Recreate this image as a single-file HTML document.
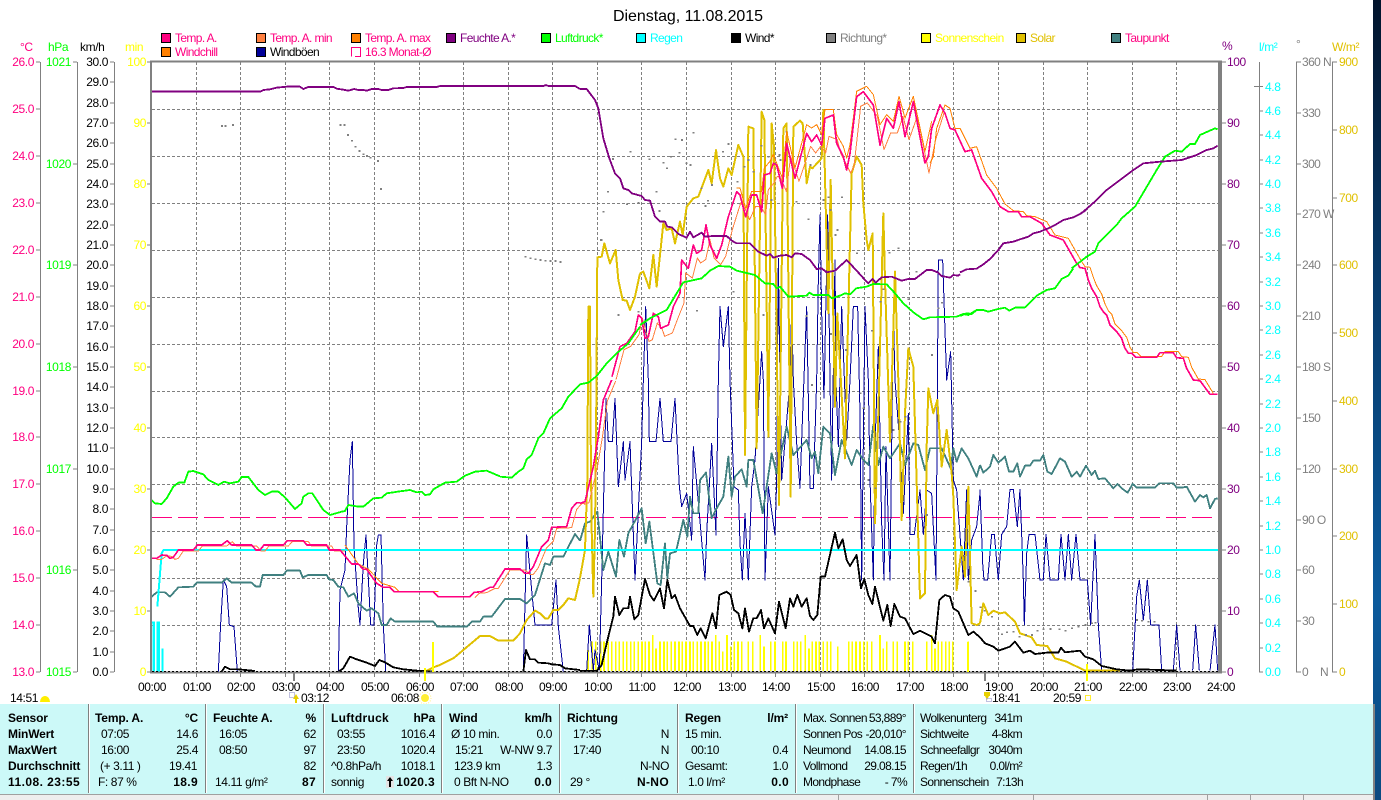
<!DOCTYPE html>
<html><head><meta charset="utf-8"><title>Dienstag, 11.08.2015</title>
<style>
html,body{margin:0;padding:0;background:#fff;width:1381px;height:800px;overflow:hidden}
svg{display:block;position:absolute;left:0;top:0}
text{font-family:"Liberation Sans",sans-serif;font-size:12px;letter-spacing:-.4px}
.tl text{letter-spacing:-.62px}
.b{font-weight:bold;letter-spacing:-.15px}
.bd{letter-spacing:.35px}
.e{text-anchor:end}
.p{fill:#ff0080}.l{fill:#00ff00}.y{fill:#ffff00}.v{fill:#800080}.c{fill:#00ffff}.g{fill:#808080}.o{fill:#e0c000}
.g{letter-spacing:-.6px}
polyline,.cr{fill:none;shape-rendering:crispEdges}
polyline{stroke-linejoin:round}
.gr{stroke:#808080;stroke-width:1;stroke-dasharray:3 2;fill:none;shape-rendering:crispEdges}
.ax{stroke:#808080;fill:none;shape-rendering:crispEdges}
.pu{stroke:#800080;stroke-width:5.5}.gn{stroke:#00ff00;stroke-width:5.5}.te{stroke:#ff0080;stroke-width:5}
.ma{stroke:#ff8000;stroke-width:3}.mi{stroke:#ff8040;stroke-width:3}.td{stroke:#408080;stroke-width:5.5}
.bl{stroke:#000099;stroke-width:3}.go{stroke:#e0c000;stroke-width:6}.bk{stroke:#000;stroke-width:5.5}
</style></head><body>
<svg width="1381" height="800" viewBox="0 0 1381 800" xmlns="http://www.w3.org/2000/svg">
<defs><linearGradient id="bg" x1="0" y1="0" x2="0" y2="1"><stop offset="0" stop-color="#02142c"/><stop offset=".35" stop-color="#073a6a"/><stop offset=".75" stop-color="#0b5a9c"/><stop offset="1" stop-color="#0a4a80"/></linearGradient></defs>
<rect width="1381" height="800" fill="#fff"/>
<rect x="1373" y="0" width="8" height="800" fill="url(#bg)"/>

<text x="688" y="21" text-anchor="middle" style="font-size:16px;letter-spacing:-.05px">Dienstag, 11.08.2015</text>

<!-- legend -->
<g stroke="#000" stroke-width="1" shape-rendering="crispEdges">
<rect x="161.5" y="33.5" width="9" height="9" fill="#ff0080"/><rect x="256.5" y="33.5" width="9" height="9" fill="#ff8040"/><rect x="351.5" y="33.5" width="9" height="9" fill="#ff8000"/><rect x="446.5" y="33.5" width="9" height="9" fill="#800080"/><rect x="541.5" y="33.5" width="9" height="9" fill="#00ff00"/><rect x="636.5" y="33.5" width="9" height="9" fill="#00ffff"/><rect x="731.5" y="33.5" width="9" height="9" fill="#000"/><rect x="826.5" y="33.5" width="9" height="9" fill="#808080"/><rect x="921.5" y="33.5" width="9" height="9" fill="#ffff00"/><rect x="1016.5" y="33.5" width="9" height="9" fill="#e0c000"/><rect x="1111.5" y="33.5" width="9" height="9" fill="#408080"/>
<rect x="161.5" y="47.5" width="9" height="9" fill="#ff8000"/><rect x="256.5" y="47.5" width="9" height="9" fill="#000099"/>
<path d="M351.5 56.5V47.5H360.5V56.5H355" fill="none" stroke="#ff0080"/>
</g>
<g class="tl">
<text class="p" x="175" y="42">Temp. A.</text><text class="p" x="270" y="42">Temp. A. min</text><text class="p" x="365" y="42">Temp. A. max</text><text class="v" x="460" y="42">Feuchte A.*</text><text class="l" x="555" y="42">Luftdruck*</text><text class="c" x="650" y="42">Regen</text><text x="745" y="42">Wind*</text><text class="g" x="840" y="42">Richtung*</text><text class="y" x="935" y="42">Sonnenschein</text><text class="o" x="1030" y="42">Solar</text><text class="p" x="1125" y="42">Taupunkt</text>
<text class="p" x="175" y="56">Windchill</text><text x="270" y="56">Windböen</text><text class="p" x="365" y="56">16.3 Monat-Ø</text>
</g>
<text class="p" x="20" y="51">°C</text><text class="l" x="48" y="51">hPa</text><text x="80" y="51">km/h</text><text class="y" x="125" y="51">min</text>
<text class="v" x="1222" y="50">%</text><text class="c" x="1259" y="51">l/m²</text><text class="g" x="1296" y="48">°</text><text class="o" x="1332" y="51">W/m²</text>

<!-- axes -->
<path class="ax" stroke-width="1" d="M40.5 62V672M77.5 62V672M114.5 62V672M1259.5 62V672M1296.5 62V672M1332.5 62V672"/>
<path class="ax" stroke-width="1" d="M36 62h4M36 109h4M36 156h4M36 203h4M36 250h4M36 297h4M36 344h4M36 391h4M36 437h4M36 484h4M36 531h4M36 578h4M36 625h4M36 672h4
M73 62h4M73 164h4M73 265h4M73 367h4M73 469h4M73 570h4M73 672h4
M110 62h4M110 82h4M110 103h4M110 123h4M110 143h4M110 164h4M110 184h4M110 204h4M110 225h4M110 245h4M110 265h4M110 286h4M110 306h4M110 326h4M110 347h4M110 367h4M110 387h4M110 408h4M110 428h4M110 448h4M110 469h4M110 489h4M110 509h4M110 530h4M110 550h4M110 570h4M110 591h4M110 611h4M110 631h4M110 652h4M110 672h4
M147 62h4M147 123h4M147 184h4M147 245h4M147 306h4M147 367h4M147 428h4M147 489h4M147 550h4M147 611h4M147 672h4
M1221 62h5M1221 123h5M1221 184h5M1221 245h5M1221 306h5M1221 367h5M1221 428h5M1221 489h5M1221 550h5M1221 611h5M1221 672h5
M1254 86.5h9M1259 111h4M1259 135h4M1259 160h4M1259 184h4M1259 208h4M1259 233h4M1259 257h4M1259 282h4M1259 306h4M1259 330h4M1259 355h4M1259 379h4M1259 404h4M1259 428h4M1259 452h4M1259 477h4M1259 501h4M1259 526h4M1259 550h4M1259 574h4M1259 599h4M1259 623h4M1259 648h4M1259 672h4
M1296 62h5M1296 113h5M1296 164h5M1296 214h5M1296 265h5M1296 316h5M1296 367h5M1296 418h5M1296 469h5M1296 520h5M1296 570h5M1296 621h5M1296 672h5
M1332 62h5M1332 130h5M1332 198h5M1332 265h5M1332 333h5M1332 401h5M1332 469h5M1332 536h5M1332 604h5M1332 672h5"/>
<g class="p e">
<text class="p e" x="34" y="66">26.0</text><text class="p e" x="34" y="113">25.0</text><text class="p e" x="34" y="160">24.0</text><text class="p e" x="34" y="207">23.0</text><text class="p e" x="34" y="254">22.0</text><text class="p e" x="34" y="301">21.0</text><text class="p e" x="34" y="348">20.0</text><text class="p e" x="34" y="395">19.0</text><text class="p e" x="34" y="441">18.0</text><text class="p e" x="34" y="488">17.0</text><text class="p e" x="34" y="535">16.0</text><text class="p e" x="34" y="582">15.0</text><text class="p e" x="34" y="629">14.0</text><text class="p e" x="34" y="676">13.0</text>
</g>
<text class="l e" x="71" y="66">1021</text><text class="l e" x="71" y="168">1020</text><text class="l e" x="71" y="269">1019</text><text class="l e" x="71" y="371">1018</text><text class="l e" x="71" y="473">1017</text><text class="l e" x="71" y="574">1016</text><text class="l e" x="71" y="676">1015</text>
<g>
<text class="e" x="108" y="66">30.0</text><text class="e" x="108" y="86">29.0</text><text class="e" x="108" y="107">28.0</text><text class="e" x="108" y="127">27.0</text><text class="e" x="108" y="147">26.0</text><text class="e" x="108" y="168">25.0</text><text class="e" x="108" y="188">24.0</text><text class="e" x="108" y="208">23.0</text><text class="e" x="108" y="229">22.0</text><text class="e" x="108" y="249">21.0</text><text class="e" x="108" y="269">20.0</text><text class="e" x="108" y="290">19.0</text><text class="e" x="108" y="310">18.0</text><text class="e" x="108" y="330">17.0</text><text class="e" x="108" y="351">16.0</text><text class="e" x="108" y="371">15.0</text><text class="e" x="108" y="391">14.0</text><text class="e" x="108" y="412">13.0</text><text class="e" x="108" y="432">12.0</text><text class="e" x="108" y="452">11.0</text><text class="e" x="108" y="473">10.0</text><text class="e" x="108" y="493">9.0</text><text class="e" x="108" y="513">8.0</text><text class="e" x="108" y="534">7.0</text><text class="e" x="108" y="554">6.0</text><text class="e" x="108" y="574">5.0</text><text class="e" x="108" y="595">4.0</text><text class="e" x="108" y="615">3.0</text><text class="e" x="108" y="635">2.0</text><text class="e" x="108" y="656">1.0</text><text class="e" x="108" y="676">0.0</text>
</g>
<text class="y e" x="146" y="66">100</text><text class="y e" x="146" y="127">90</text><text class="y e" x="146" y="188">80</text><text class="y e" x="146" y="249">70</text><text class="y e" x="146" y="310">60</text><text class="y e" x="146" y="371">50</text><text class="y e" x="146" y="432">40</text><text class="y e" x="146" y="493">30</text><text class="y e" x="146" y="554">20</text><text class="y e" x="146" y="615">10</text><text class="y e" x="146" y="676">0</text>
<text class="v" x="1227" y="66">100</text><text class="v" x="1227" y="127">90</text><text class="v" x="1227" y="188">80</text><text class="v" x="1227" y="249">70</text><text class="v" x="1227" y="310">60</text><text class="v" x="1227" y="371">50</text><text class="v" x="1227" y="432">40</text><text class="v" x="1227" y="493">30</text><text class="v" x="1227" y="554">20</text><text class="v" x="1227" y="615">10</text><text class="v" x="1227" y="676">0</text>
<text class="c" x="1265" y="91">4.8</text><text class="c" x="1265" y="115">4.6</text><text class="c" x="1265" y="139">4.4</text><text class="c" x="1265" y="164">4.2</text><text class="c" x="1265" y="188">4.0</text><text class="c" x="1265" y="212">3.8</text><text class="c" x="1265" y="237">3.6</text><text class="c" x="1265" y="261">3.4</text><text class="c" x="1265" y="286">3.2</text><text class="c" x="1265" y="310">3.0</text><text class="c" x="1265" y="334">2.8</text><text class="c" x="1265" y="359">2.6</text><text class="c" x="1265" y="383">2.4</text><text class="c" x="1265" y="408">2.2</text><text class="c" x="1265" y="432">2.0</text><text class="c" x="1265" y="456">1.8</text><text class="c" x="1265" y="481">1.6</text><text class="c" x="1265" y="505">1.4</text><text class="c" x="1265" y="530">1.2</text><text class="c" x="1265" y="554">1.0</text><text class="c" x="1265" y="578">0.8</text><text class="c" x="1265" y="603">0.6</text><text class="c" x="1265" y="627">0.4</text><text class="c" x="1265" y="652">0.2</text><text class="c" x="1265" y="676">0.0</text>
<text class="g" x="1302" y="66">360 N</text><text class="g" x="1302" y="117">330</text><text class="g" x="1302" y="168">300</text><text class="g" x="1302" y="218">270 W</text><text class="g" x="1302" y="269">240</text><text class="g" x="1302" y="320">210</text><text class="g" x="1302" y="371">180 S</text><text class="g" x="1302" y="422">150</text><text class="g" x="1302" y="473">120</text><text class="g" x="1302" y="524">90 O</text><text class="g" x="1302" y="574">60</text><text class="g" x="1302" y="625">30</text><text class="g" x="1302" y="676">0</text><text class="g" x="1320" y="676">N</text>
<text class="o" x="1339" y="66">900</text><text class="o" x="1339" y="134">800</text><text class="o" x="1339" y="202">700</text><text class="o" x="1339" y="269">600</text><text class="o" x="1339" y="337">500</text><text class="o" x="1339" y="405">400</text><text class="o" x="1339" y="473">300</text><text class="o" x="1339" y="540">200</text><text class="o" x="1339" y="608">100</text><text class="o" x="1339" y="676">0</text>

<!-- grid -->
<path class="gr" d="M196.5 62V672M240.5 62V672M285.5 62V672M329.5 62V672M374.5 62V672M419.5 62V672M463.5 62V672M508.5 62V672M552.5 62V672M597.5 62V672M641.5 62V672M686.5 62V672M731.5 62V672M775.5 62V672M820.5 62V672M864.5 62V672M909.5 62V672M953.5 62V672M998.5 62V672M1043.5 62V672M1087.5 62V672M1132.5 62V672M1176.5 62V672"/>
<path class="gr" d="M152 109.5H1218M152 156.5H1218M152 203.5H1218M152 250.5H1218M152 297.5H1218M152 344.5H1218M152 391.5H1218M152 437.5H1218M152 484.5H1218M152 531.5H1218M152 578.5H1218M152 625.5H1218"/>
<path class="cr" stroke="#ff0080" stroke-width="1" stroke-dasharray="20 6" d="M152 517.5H1218"/>

<!-- sunshine bars -->
<g transform="translate(580,380) scale(.33333)">
<path class="cr" stroke="#ffff00" stroke-width="5" d="M24 810V873M37 785V873M47 785V873M62 785V873M72 785V873M85 785V873M95 785V873M107 785V873M118 785V873M130 785V873M140 785V873M152 785V873M163 785V873M175 785V873M186 785V873M196 785V873M207 785V873M218 765V873M228 805V873M240 785V873M252 785V873M262 785V873M274 785V873M285 785V873M297 785V873M307 785V873M318 785V873M330 785V873M340 785V873M352 785V873M363 785V873M375 785V873M385 785V873M396 785V873M407 765V873M418 785V873M428 815V873M441 765V873M452 800V873M463 785V873M474 785V873M485 785V873M505 785V873M518 785V873M541 765V873M552 800V873M572 785V873M585 785V873M608 785V873M618 785V873M641 785V873M652 785V873M662 785V873M676 765V873M687 805V873M697 785V873M708 785V873M718 785V873M730 785V873M742 785V873M752 785V873M773 800V873M806 785V873M817 785V873M828 785V873M840 785V873M851 785V873M862 785V873M875 785V873M900 765V873M910 805V873M920 785V873M940 785V873M952 785V873M975 785V873M985 785V873M998 785V873M1040 785V873M1055 765V873M1065 805V873M1075 785V873M1085 785V873M1097 785V873M1108 785V873M1118 785V873M1165 785V873"/>
</g>

<!-- blue gusts -->
<g transform="translate(150,430) scale(.33333)"><polyline class="bl" points="205,725 212,580 220,450 230,470 238,585 252,590 262,725"/><polyline class="bl" points="565,725 570,480 585,420 590,290 600,90 607,35 612,350 625,535 630,585 640,400 648,315 655,445 662,585 672,585 680,345 685,315 693,315 700,585 707,725"/><polyline class="bl" points="1120,725 1130,315 1145,480 1155,585 1205,585 1218,450 1225,590 1240,725"/></g>
<g transform="translate(580,380) scale(.33333)"><polyline class="bl" points="0,872 20,872 28,735 40,870 45,810 58,870 65,600 78,55 85,185 97,185 105,55 115,320 130,185 135,300 150,185 165,600 185,185 190,0 197,-220 205,0 208,185 228,185 240,55 250,185 273,185 285,55 298,320 305,380 320,340 335,480 340,200 358,400 375,600 380,460 395,190 408,465 415,0 420,-220 430,-100 445,-220 450,0 462,320 475,330 480,490 487,600 495,400 505,600 515,320 525,240 540,0 545,-85 550,0 555,600 565,320 585,465 590,300 595,-365 600,0 605,300 615,185 630,0 635,-220 640,0 650,190 660,325 665,180 680,-220 690,325 700,325 710,0 715,-300 720,-495 725,-200 732,55 743,-495 750,0 755,300 765,-360 768,0 775,200 785,-220 800,180 810,0 820,-220 833,-220 840,100 845,600 855,-220 865,0 870,300 880,600 885,200 895,-100 905,430 912,600 918,200 930,600 940,-200 945,0 960,200 970,400 985,100 990,463 1003,463 1020,330 1030,463 1040,330 1055,340 1068,600 1075,-360 1088,-360 1100,0 1112,-85 1120,300 1130,330 1150,600 1160,330 1165,600 1175,480 1190,440 1200,340"/></g>
<g transform="translate(960,400) scale(.33333)"><polyline class="bl" points="60,268 68,490 72,540 83,540 95,403 103,403 115,540 125,403 140,380 150,268 160,268 172,380 180,268 190,540 193,675 200,460 207,403 225,403 240,540 250,540 258,403 270,540 295,540 303,403 315,540 325,403 335,540 348,403 360,540 382,540 392,675 405,403 415,675 425,812"/><polyline class="bl" points="518,812 530,590 538,540 550,660 562,540 572,675 597,675 605,812"/><polyline class="bl" points="640,812 650,675 660,812"/><polyline class="bl" points="698,812 707,675 718,812"/><polyline class="bl" points="750,812 765,675 773,812"/></g>

<!-- dew point -->
<g transform="translate(150,430) scale(.33333)"><polyline class="td" points="5,500 20,487 45,487 60,500 85,472 130,470 140,458 215,458 230,445 245,458 305,458 318,470 330,470 338,435 400,435 410,422 450,422 458,442 475,435 530,435 537,448 550,450 565,470 580,472 595,500 612,490 625,520 650,542 665,535 685,550 695,585 710,585 722,565 735,575 850,575 862,590 950,590 965,575 990,575 1000,560 1025,560 1065,507 1110,507 1130,520 1155,495 1185,400 1200,405 1210,380 1240,380 1275,312 1290,332"/></g>
<g transform="translate(580,380) scale(.33333)"><polyline class="td" points="0,483 15,430 30,425 52,395 70,570 85,515 108,590 118,480 132,530 145,460 185,385 197,490 208,425 232,610 242,615 255,490 262,595 270,520 288,515 310,420 322,470 330,350 340,400 355,400 360,300 378,278 395,415 410,385 430,350 445,230 455,350 465,290 485,268 500,320 505,240 520,240 548,400 575,220 590,280 620,140 640,225 680,180 695,235 705,215 715,280 730,140 750,160 765,285 785,180 815,255 830,210 850,240 865,255 880,135 895,255 910,200 930,235 960,190 975,255 1000,190 1015,195 1035,270 1050,205 1085,205 1112,265 1120,205 1130,245 1145,205 1165,235 1190,290 1200,255"/></g>
<g transform="translate(960,400) scale(.33333)"><polyline class="td" points="60,195 70,218 90,200 100,165 115,188 135,170 147,215 160,215 172,190 180,230 195,197 210,197 220,182 240,182 250,165 262,215 275,222 300,175 315,185 335,230 350,215 360,230 378,197 395,225 405,212 415,237 435,235 460,265 472,252 485,265 503,278 518,252 530,263 585,263 598,250 640,250 650,263 665,263 680,260 705,305 720,285 730,292 740,285 750,325 765,297 773,295"/></g>

<!-- solar -->
<g transform="translate(150,430) scale(.33333)"><polyline class="go" points="825,725 850,712 870,705 910,685 940,660 990,618 1020,618 1045,632 1090,632 1110,610 1130,570 1155,542 1170,550 1185,565 1195,565 1210,540 1225,540 1240,525 1255,505 1275,510 1290,445"/></g>
<g transform="translate(500,230) scale(.33333)"><polyline class="go" points="240,1044 255,960 262,750 265,230 270,230 272,620 275,900 280,1100 285,900 288,640 292,82 305,80 313,40 330,100 347,60 355,150 368,210 380,212 390,240 405,200 420,130"/></g>
<g transform="translate(580,80) scale(.33333)"><polyline class="go" points="180,580 190,575 208,625 220,525 230,620 250,430 260,450 275,445 285,490 300,425 308,465 320,380 340,355 355,350 385,270 395,310 408,210 420,295 430,320 445,265 455,285 475,195 490,230 495,1125 505,140 520,145 530,1105 545,95 553,120 565,1070 575,130 582,200 597,1275 610,145 620,130 632,1250 640,140 660,122 668,130 680,310 690,260 697,265 725,235 730,90 745,700 752,300 765,980 772,700 795,1135 800,900 815,280 830,230 845,255 850,370 860,480 865,510 878,460 885,1330 895,1000 910,400 915,600 930,1085 945,575 955,900 965,1320 975,1000 985,805 1000,860 1020,1555 1035,1540 1040,1100 1045,925 1060,1000 1072,960 1085,1160 1100,1050 1115,1180 1120,1250 1130,1530 1145,1400 1155,1490 1165,1220 1175,1630 1190,1635 1200,1630"/></g>
<g transform="translate(960,400) scale(.33333)"><polyline class="go" points="60,670 70,610 85,645 100,632 120,640 135,637 165,665 180,700 215,712 230,735 262,738 285,775 320,785 375,812 480,812"/></g>

<!-- direction dots -->
<g class="cr" stroke="#808080" stroke-width="5">
<path transform="scale(.33333)" d="M663 378h6M673 378h6M696 375h6M1018 375h6M1030 375h6M1041 405h6M1053 422h6M1063 440h6M1075 453h6M1088 463h6M1098 468h6M1108 473h6M1131 483h6M1140 567h6"/>
<path transform="translate(500,230) scale(.33333)" d="M73 80h6M88 85h6M103 88h6M118 90h6M133 92h6M148 93h6M163 93h6M178 96h6M301 30h6M353 255h6"/>
<path transform="translate(580,80) scale(.33333)" d="M148 215h6M206 238h6M283 178h6M303 180h6M295 218h6M316 250h6M338 158h6M328 255h6M248 248h6M270 230h6M258 265h6M361 325h6M393 315h6M426 215h6M443 192h6M470 305h6M491 260h6M503 240h6M518 275h6M541 197h6M595 225h6M616 155h6M646 365h6M728 360h6M743 352h6M783 352h6M688 255h6M683 418h6M763 465h6M770 450h6M828 520h6M748 390h6M113 705h6M348 692h6M458 635h6M548 705h6M676 708h6M795 810h6M750 762h6M873 752h6M898 665h6M908 628h6M953 505h6M926 518h6M1006 575h6M983 658h6M1073 685h6M1083 668h6M1053 825h6M138 373h6M173 368h6M236 393h6M226 335h6M68 395h6M81 335h6M60 480h6M96 237h6M173 695h6M373 378h6M381 362h6M571 360h6M598 240h6M563 230h6"/>
<path transform="translate(580,380) scale(.33333)" d="M693 15h6M838 40h6M848 85h6M938 150h6M958 125h6M973 110h6M883 325h6M863 300h6M1038 405h6"/>
<path transform="translate(960,400) scale(.33333)" d="M23 545h6M43 573h6M58 622h6M70 632h6M93 650h6M113 688h6M123 703h6M138 697h6M158 695h6M176 710h6M195 705h6M213 705h6M230 692h6M248 688h6M268 687h6M295 688h6M313 692h6M333 685h6M353 680h6M373 675h6M393 670h6M403 668h6M528 660h6M543 662h6M563 665h6M580 665h6"/>
</g>

<!-- rain -->
<g transform="translate(150,430) scale(.33333)"><path class="cr" stroke="#00ffff" stroke-width="6" d="M5 725V578H12V725M23 725V578H27V725M37 725V655M22 530L35 370L40 360"/></g>
<path class="cr" stroke="#00ffff" stroke-width="2" d="M163 550H1218"/>

<!-- wind -->
<g transform="translate(150,430) scale(.33333)"><polyline class="bk" points="215,725 225,710 240,718 265,718 315,723"/><polyline class="bk" points="565,725 580,715 600,680 620,688 650,698 675,708 688,690 705,697 730,712 760,718 800,722 850,725"/><polyline class="bk" points="1120,725 1128,660 1140,688 1155,688 1165,698 1195,700 1205,703 1230,705 1245,715 1290,720"/></g>
<g transform="translate(580,380) scale(.33333)"><polyline class="bk" points="0,873 50,873 65,855 80,790 100,710 105,650 118,705 130,685 145,685 150,650 163,718 175,705 195,597 210,645 222,662 240,625 252,685 262,600 275,655 285,645 300,685 330,738 340,738 352,765 362,745 377,775 397,700 408,745 418,645 440,635 452,645 462,690 475,700 487,745 495,685 507,755 520,715 530,715 543,690 552,745 565,715 585,760 597,665 617,745 630,655 640,680 652,645 665,680 680,655 690,708 700,720 712,705 722,590 735,590 765,458 775,505 788,478 800,540 810,558 830,525 843,625 853,597 865,645 877,672 885,620 910,722 922,675 932,738 943,672 960,710 975,715 1000,762 1020,752 1055,770 1065,790 1078,660 1095,645 1110,650 1120,685 1135,695 1165,765 1180,755 1200,772"/></g>
<g transform="translate(960,400) scale(.33333)"><polyline class="bk" points="60,712 75,730 100,740 115,752 150,740 165,725 190,758 210,752 225,762 260,758 295,758 303,743 315,757 360,752 375,770 400,778 425,798 470,808 510,812 535,808 600,810 650,812"/></g>

<!-- temperature min / max -->
<g transform="translate(155,431) scale(.33333)"><polyline class="mi" points="5,385 20,385 35,375 50,376 60,385 70,382 85,360 130,360 142,345 215,345 232,332 245,345 305,345 318,360 330,360 342,345 400,345 412,332 460,332 470,345 530,345 538,360 570,360"/><polyline class="mi" points="960,500 972,487 995,485 1020,472 1030,472 1065,417 1110,417 1125,430 1135,430 1150,410 1175,350 1195,330 1205,292 1250,290 1265,235 1280,218 1290,218"/></g>
<g transform="translate(584,381) scale(.33333)"><polyline class="mi" points="0,370 15,365 40,260 55,170 70,60 95,0"/></g>
<g transform="translate(584,83) scale(.33333)"><polyline class="mi" points="96,890 120,800 140,790 165,755 175,705 185,745 195,775 205,770 220,720 235,740 242,760 265,750 280,710 300,660 305,570 325,585 340,525 350,540 365,530 378,470 390,525 410,545 425,520 445,440 470,360 480,370 497,410 515,370 530,370 545,395 553,320 570,300 580,280 590,285 607,325 620,220 645,295 680,190 695,210 710,190 725,210 735,160 760,170 770,210 790,250 800,270 810,250 830,70 850,60 880,100 900,200 920,150 940,150 957,100 975,170 1000,100 1035,270 1055,170 1080,90"/></g>
<g transform="translate(155,430) scale(.33333)"><polyline class="ma" points="570,345 610,402 640,418 680,460 720,472 732,485 850,485"/></g>
<g transform="translate(580,78) scale(.33333)"><polyline class="ma" points="470,330 480,330 497,390 515,340 545,340 553,270 570,250 580,230 607,300 620,160 645,270 680,140 695,150 710,140 725,170 735,95 760,95 770,170 790,205 800,240 810,200 830,40 860,25 880,50 900,140 920,110 940,130 957,55 975,120 1000,55 1035,220 1055,130"/></g>
<g transform="translate(925,0) scale(.33333)"><polyline class="ma" points="15,490 25,470 35,385 60,315 75,325 90,385 105,385 135,445 155,440 185,525 215,565 240,612 265,632 295,635 305,647 330,650 365,665 390,705 430,715 470,785 480,800"/></g>
<g transform="translate(965,209) scale(.33333)"><polyline class="ma" points="351,159 360,173 375,175 385,205 395,230 410,255 420,285 430,305 440,315 450,345 470,365 485,385 495,415 505,430 515,430 527,442 590,442 600,428 640,428 650,443 670,445 680,475 700,510 720,512 745,553"/></g>

<!-- temperature -->
<g transform="translate(150,430) scale(.33333)"><polyline class="te" points="5,385 20,385 35,375 50,376 60,385 70,382 85,360 130,360 142,345 215,345 232,332 245,345 305,345 318,360 330,360 342,345 400,345 412,332 460,332 470,345 530,345 538,360 570,360 605,402 625,402 640,418 650,418 680,460 700,472 720,472 732,485 850,485 865,500 960,500 972,487 995,485 1020,472 1030,472 1065,417 1110,417 1125,430 1135,430 1150,410 1175,350 1195,330 1205,292 1250,290 1265,235 1280,218 1290,218"/></g>
<g transform="translate(580,380) scale(.33333)"><polyline class="te" points="0,370 15,365 40,260 55,170 70,60 95,0"/></g>
<g transform="translate(580,80) scale(.33333)"><polyline class="te" points="96,890 120,800 140,790 165,755 175,705 185,715 195,775 205,770 220,700 235,710 242,745 265,735 280,680 300,640 305,540 325,565 340,495 350,520 365,510 378,435 390,495 410,535 425,495 445,410 470,335 480,345 497,410 515,345 530,345 545,395 553,285 570,280 580,250 590,255 607,325 620,190 645,295 680,160 695,185 710,165 725,195 735,115 760,105 770,190 790,230 800,270 810,220 830,50 850,35 880,75 900,195 920,115 940,145 957,65 975,170 1000,65 1035,250"/></g>
<g transform="translate(920,0) scale(.33333)"><polyline class="te" points="15,490 25,470 35,385 60,315 75,340 90,385 105,390 135,455 155,450 185,535 215,575 240,620 265,635 295,635 305,650 330,650 365,670 390,705 430,720 470,790"/></g>
<g transform="translate(960,210) scale(.33333)"><polyline class="te" points="351,159 360,173 375,175 385,210 395,235 410,260 420,290 430,305 440,315 450,345 470,365 485,385 495,415 505,430 515,430 527,442 590,442 600,428 640,428 650,443 670,445 680,475 700,510 720,512 750,553 773,553"/></g>

<!-- pressure -->
<g transform="translate(150,430) scale(.33333)"><polyline class="gn" points="5,210 15,220 35,222 50,205 70,170 85,158 103,158 115,125 130,123 160,133 175,150 205,165 222,155 240,160 265,155 275,141 295,141 325,180 345,195 365,185 385,185 405,202 435,237 455,220 460,200 475,190 487,190 520,240 540,255 575,245 585,243 595,225 625,230 640,230 670,205 695,203 710,190 750,184 780,180 800,187 815,185 825,195 840,193 850,178 885,158 920,155 945,137 975,125 1010,122 1040,135 1050,139"/></g>
<g transform="translate(500,230) scale(.33333)"><polyline class="gn" points="0,740 35,743 55,725 70,715 80,688 95,675 115,625 130,610 150,565 185,535 205,500 240,463 265,458 290,438 320,400 350,370 385,340 420,290"/></g>
<g transform="translate(580,80) scale(.33333)"><polyline class="gn" points="180,735 210,715 260,690 290,640 310,607 365,595 390,572 415,558 450,560 470,572 525,585 555,610 580,612 590,625 600,620 625,650 680,647 688,638 700,645 745,645 755,655 785,645 795,640 810,643 828,625 860,620 880,612 920,613 945,640 970,670 1000,697 1030,718 1050,712 1130,710 1150,702 1165,705 1190,690 1200,690"/></g>
<g transform="translate(960,210) scale(.33333)"><polyline class="gn" points="0,318 20,310 35,312 50,300 70,300 85,305 110,298 135,293 148,302 165,293 195,292 230,257 260,240 285,235 305,207 325,197 340,175"/></g>
<g transform="translate(920,0) scale(.33333)"><polyline class="gn" points="455,805 500,770 525,755 535,730 590,675 605,655 645,620 710,510 735,470 765,452 785,455 810,432 825,432 840,405 885,385 893,388"/></g>

<!-- humidity -->
<g transform="scale(.33333)"><polyline class="pu" points="453,275 780,275 790,270 810,268 830,263 860,260 900,260 910,267 925,261 1000,261 1010,266 1030,269 1045,272 1062,267 1075,270 1090,270 1100,272 1115,267 1135,267 1145,270 1165,270 1180,265 1210,264 1220,261 1310,261 1320,258 1380,258"/></g>
<g transform="translate(460,0) scale(.33333)"><polyline class="pu" points="0,258 250,258 258,255 265,258 345,258 360,267"/></g>
<g transform="translate(580,80) scale(.33333)"><polyline class="pu" points="0,27 20,27 45,60 55,85 70,175 88,235 105,280 120,295 130,325 145,330 155,340 185,348 195,360 210,362 225,410 240,425 255,425 262,440 275,442 295,462 320,473 330,455 340,472 365,458 375,470 400,468 440,468 455,482 470,490 510,490 535,515 560,527 570,522 580,533 600,527 620,525 635,532 645,520 665,522 690,540 710,567 725,565 740,577 765,572 800,540 830,572 855,600 865,610 878,597 887,608 905,592 935,590 965,602 985,597 1005,597 1040,570 1055,570 1075,578 1085,588 1110,593 1120,585 1135,587 1140,583"/></g>
<g transform="translate(960,210) scale(.33333)"><polyline class="pu" points="0,187 20,178 50,176 70,163 90,147 115,120 130,100 160,95 180,88 205,80 220,70 240,65 265,55 285,45 310,30 340,22 360,12 378,0"/></g>
<g transform="translate(920,0) scale(.33333)"><polyline class="pu" points="490,635 530,600 560,570 600,540 640,510 670,490 720,485 785,480 830,465 860,450 880,445 893,437"/></g>

<!-- frame -->
<path class="ax" stroke-width="2" d="M150 61.5H1222M151 61V672M150 672.5H1222"/>
<path class="ax" stroke-width="3" d="M1220.5 61V673"/>
<path class="ax" stroke-width="1" d="M1218.5 62V672"/>
<path class="cr" stroke="#000" stroke-width="1" stroke-dasharray="2 2" d="M152 671.5H1218"/>
<path class="ax" stroke-width="1" d="M196.5 673v4M240.5 673v4M285.5 673v4M329.5 673v4M374.5 673v4M419.5 673v4M463.5 673v4M508.5 673v4M552.5 673v4M597.5 673v4M641.5 673v4M686.5 673v4M731.5 673v4M775.5 673v4M820.5 673v4M864.5 673v4M909.5 673v4M953.5 673v4M998.5 673v4M1043.5 673v4M1087.5 673v4M1132.5 673v4M1176.5 673v4"/>
<path class="cr" stroke="#808080" stroke-width="2" d="M294 672v9M985 672v9"/>
<path class="cr" stroke="#ffff00" stroke-width="2" d="M425 668v13M433 642v30M1087 664v17M968 642v30"/>

<!-- hour labels -->
<g text-anchor="middle"><text x="152" y="691">00:00</text><text x="197" y="691">01:00</text><text x="241" y="691">02:00</text><text x="286" y="691">03:00</text><text x="330" y="691">04:00</text><text x="375" y="691">05:00</text><text x="420" y="691">06:00</text><text x="464" y="691">07:00</text><text x="509" y="691">08:00</text><text x="553" y="691">09:00</text><text x="598" y="691">10:00</text><text x="642" y="691">11:00</text><text x="687" y="691">12:00</text><text x="732" y="691">13:00</text><text x="776" y="691">14:00</text><text x="821" y="691">15:00</text><text x="865" y="691">16:00</text><text x="910" y="691">17:00</text><text x="954" y="691">18:00</text><text x="999" y="691">19:00</text><text x="1044" y="691">20:00</text><text x="1088" y="691">21:00</text><text x="1133" y="691">22:00</text><text x="1177" y="691">23:00</text><text x="1221" y="691">24:00</text></g>

<!-- astro row -->
<text x="10" y="702">14:51</text>
<path d="M40 702a5 6 0 0 1 10 0z" fill="#ffee00"/>
<rect x="289.500" y="692.500" width="5" height="5" fill="none" stroke="#8080c0" stroke-dasharray="1 1"/>
<path d="M296 694l-3 5h2v4h2v-4h2z" fill="#e8d000"/>
<text x="301" y="702">03:12</text>
<text x="391" y="702">06:08</text>
<circle cx="425" cy="698" r="4" fill="#ffee33"/><circle cx="425" cy="698" r="6" fill="none" stroke="#ffee88" stroke-dasharray="1 1.500"/>
<path d="M984 692h6v4h-1l-2 4-2-4h-1z" fill="#e8d000"/>
<rect x="986.500" y="698.500" width="5" height="3" fill="none" stroke="#8080c0" stroke-dasharray="1 1"/>
<text x="992" y="702">18:41</text>
<text x="1053" y="702">20:59</text>
<rect x="1085.500" y="695.500" width="5" height="5" fill="none" stroke="#ffee33"/>

<!-- data panel -->
<rect x="0" y="704" width="1373" height="90" fill="#ccf9f8"/>
<rect x="1373" y="704" width="2" height="96" fill="#808080"/>
<path class="cr" stroke="#808080" stroke-width="1" d="M88.500 704V793M205.500 704V793M323.500 704V793M441.500 704V793M559.500 704V793M677.500 704V793M795.500 704V793M913.500 704V793"/>
<path class="cr" stroke="#fff" stroke-width="1" d="M89.500 704V793M206.500 704V793M324.500 704V793M442.500 704V793M560.500 704V793M678.500 704V793M796.500 704V793M914.500 704V793"/>
<rect x="0" y="794" width="1373" height="6" fill="#eeeeee"/>
<path class="cr" stroke="#a0a0a0" stroke-width="1" d="M0 794.500H1373M838.500 795V800M1033.500 795V800M1207.500 795V800M1250.500 795V800M1303.500 795V800"/>

<text class="b" x="8" y="722">Sensor</text><text class="b" x="8" y="738">MinWert</text><text class="b" x="8" y="754">MaxWert</text><text class="b" x="8" y="770">Durchschnitt</text><text class="b" x="8" y="786" style="letter-spacing:.45px">11.08. 23:55</text>

<text class="b" x="95" y="722">Temp. A.</text><text class="b e" x="198" y="722">°C</text>
<text x="101" y="738">07:05</text><text class="e" x="198" y="738">14.6</text>
<text x="101" y="754">16:00</text><text class="e" x="198" y="754">25.4</text>
<text x="100" y="770">(+ 3.11 )</text><text class="e" x="197" y="770">19.41</text>
<text x="98" y="786">F: 87 %</text><text class="b bd e" x="198" y="786">18.9</text>

<text class="b" x="213" y="722">Feuchte A.</text><text class="b e" x="316" y="722">%</text>
<text x="219" y="738">16:05</text><text class="e" x="316" y="738">62</text>
<text x="219" y="754">08:50</text><text class="e" x="316" y="754">97</text>
<text class="e" x="316" y="770">82</text>
<text x="215" y="786">14.11 g/m²</text><text class="b bd e" x="316" y="786">87</text>

<text class="b" x="331" y="722" style="letter-spacing:.3px">Luftdruck</text><text class="b e" x="435" y="722">hPa</text>
<text x="337" y="738">03:55</text><text class="e" x="435" y="738">1016.4</text>
<text x="337" y="754">23:50</text><text class="e" x="435" y="754">1020.4</text>
<text x="331" y="770">^0.8hPa/h</text><text class="e" x="435" y="770">1018.1</text>
<text x="331" y="786">sonnig</text>
<rect x="386" y="776" width="8" height="12" fill="#e4e4e4"/>
<path d="M390 777l-3 4h2v6h2v-6h2z" fill="#000"/>
<text class="b bd e" x="435" y="786">1020.3</text>

<text class="b" x="449" y="722">Wind</text><text class="b e" x="552" y="722">km/h</text>
<text x="451" y="738">Ø 10 min.</text><text class="e" x="552" y="738">0.0</text>
<text x="455" y="754">15:21</text><text class="e" x="552" y="754">W-NW 9.7</text>
<text x="454" y="770">123.9 km</text><text class="e" x="552" y="770">1.3</text>
<text x="454" y="786">0 Bft N-NO</text><text class="b bd e" x="552" y="786">0.0</text>

<text class="b" x="567" y="722">Richtung</text>
<text x="573" y="738">17:35</text><text class="e" x="669" y="738">N</text>
<text x="573" y="754">17:40</text><text class="e" x="669" y="754">N</text>
<text class="e" x="669" y="770">N-NO</text>
<text x="570" y="786">29 °</text><text class="b bd e" x="669" y="786">N-NO</text>

<text class="b" x="685" y="722">Regen</text><text class="b e" x="788" y="722">l/m²</text>
<text x="685" y="738">15 min.</text>
<text x="691" y="754">00:10</text><text class="e" x="788" y="754">0.4</text>
<text x="685" y="770">Gesamt:</text><text class="e" x="788" y="770">1.0</text>
<text x="688" y="786">1.0 l/m²</text><text class="b bd e" x="789" y="786">0.0</text>

<g class="tl">
<text x="803" y="722">Max. Sonnen</text><text class="e" x="906" y="722">53,889°</text>
<text x="803" y="738">Sonnen Pos</text><text class="e" x="906" y="738">-20,010°</text>
<text x="803" y="754">Neumond</text><text class="e" x="906" y="754">14.08.15</text>
<text x="803" y="770">Vollmond</text><text class="e" x="906" y="770">29.08.15</text>
<text x="803" y="786">Mondphase</text><text class="e" x="907" y="786">- 7%</text>

<text x="920" y="722">Wolkenunterg</text><text class="e" x="1022" y="722">341m</text>
<text x="920" y="738">Sichtweite</text><text class="e" x="1022" y="738">4-8km</text>
<text x="920" y="754">Schneefallgr</text><text class="e" x="1022" y="754">3040m</text>
<text x="920" y="770">Regen/1h</text><text class="e" x="1022" y="770">0.0l/m²</text>
<text x="920" y="786">Sonnenschein</text><text class="e" x="1023" y="786">7:13h</text>
</g>
</svg>
</body></html>
